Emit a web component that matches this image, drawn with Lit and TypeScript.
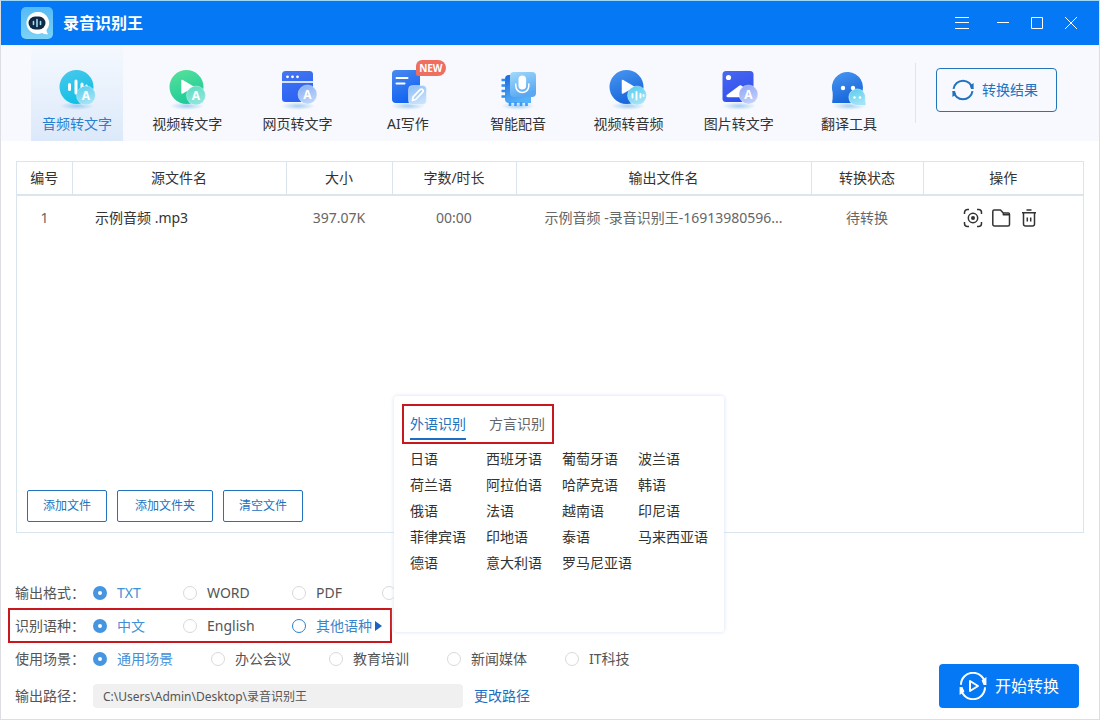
import { LitElement, html, svg, css, TemplateResult } from "lit";
import { customElement, property, state } from "lit/decorators.js";
import { classMap } from "lit/directives/class-map.js";

interface Tool {
  id: string;
  label: string;
  badge?: string;
}

interface Choice {
  label: string;
  hidden?: boolean;
  more?: boolean;
}

const TOOLS: Tool[] = [
  { id: "audio", label: "音频转文字" },
  { id: "video", label: "视频转文字" },
  { id: "web", label: "网页转文字" },
  { id: "write", label: "AI写作", badge: "NEW" },
  { id: "dub", label: "智能配音" },
  { id: "extract", label: "视频转音频" },
  { id: "image", label: "图片转文字" },
  { id: "translate", label: "翻译工具" },
];

const LANGUAGES = [
  "日语", "西班牙语", "葡萄牙语", "波兰语",
  "荷兰语", "阿拉伯语", "哈萨克语", "韩语",
  "俄语", "法语", "越南语", "印尼语",
  "菲律宾语", "印地语", "泰语", "马来西亚语",
  "德语", "意大利语", "罗马尼亚语",
];

const letterBadge = (cx: number, cy: number, fill: string) => svg`
  <circle cx=${cx} cy=${cy} r="9.5" fill=${fill} stroke="#fff" stroke-opacity=".35"/>
  <text x=${cx} y=${cy + 4} text-anchor="middle" font-size="12" font-weight="700" fill="#fff">A</text>`;

const ART: Record<string, TemplateResult> = {
  audio: svg`
    <circle cx="21.5" cy="20" r="17" fill="url(#g-cyan)"/>
    <g stroke="#fff" stroke-width="3" stroke-linecap="round">
      <path d="M14.5 17.500v5M21 14v12M27 17v5" /><path d="M31.500 18.500v1.500" stroke-width="2"/>
    </g>
    ${letterBadge(31, 28.5, "url(#b-cyan)")}`,
  video: svg`
    <circle cx="21.5" cy="20" r="17" fill="url(#g-green)"/>
    <path d="M17 13.500v12.500L28 19.800z" fill="#fff" stroke="#fff" stroke-width="1.500" stroke-linejoin="round"/>
    ${letterBadge(31, 28.5, "url(#b-green)")}`,
  web: svg`
    <rect x="6" y="4" width="31" height="31" rx="3.500" fill="url(#g-royal)"/>
    <path d="M6 15h31" stroke="#fff" stroke-width="1.600"/>
    <g fill="#fff"><circle cx="11.500" cy="9.800" r="1.400"/><circle cx="16.500" cy="9.800" r="1.400"/><circle cx="21.500" cy="9.800" r="1.400"/></g>
    ${letterBadge(31.5, 27.5, "url(#b-royal)")}`,
  write: svg`
    <rect x="6" y="3" width="28" height="33" rx="4" fill="url(#g-azure)"/>
    <path d="M10.500 11h11M10.500 16.500h8" stroke="#fff" stroke-width="2" stroke-linecap="round"/>
    <rect x="22.500" y="18.500" width="18" height="19" rx="4" fill="url(#b-azure)" stroke="#fff" stroke-opacity=".4"/>
    <path d="M26.500 33.500l.6-3.600 7-7.200a1.700 1.700 0 0 1 2.600 2.400l-7 7.400z" fill="none" stroke="#fff" stroke-width="1.700" stroke-linejoin="round"/>`,
  dub: svg`
    <path d="M13 8h22v28H13a4 4 0 0 1-4-4V12a4 4 0 0 1 4-4z" fill="url(#g-chip)"/>
    <path d="M5.500 13h4M5.500 18.500h4M5.500 24h4M5.500 29.500h4" stroke="#2c8df0" stroke-width="2.600"/>
    <path d="M14 35v4M19.500 35v4M25 35v4M30.500 35v4" stroke="#3f9cf4" stroke-width="2.600"/>
    <path d="M34 31v2a3 3 0 0 1-3 3h-4l4-6z" fill="#55b1f8"/>
    <rect x="14" y="5" width="26" height="25" rx="4" fill="url(#b-chip)"/>
    <rect x="22.500" y="8.500" width="7.600" height="14" rx="3.800" fill="#fff"/>
    <path d="M19.800 17v2a6.500 6.500 0 0 0 13 0v-2" fill="none" stroke="#fff" stroke-width="1.500" stroke-linecap="round"/>`,
  extract: svg`
    <circle cx="20.500" cy="20" r="17" fill="url(#g-blue)"/>
    <path d="M16.500 13.500v12.500L27.500 19.800z" fill="#fff" stroke="#fff" stroke-width="1.500" stroke-linejoin="round"/>
    <circle cx="31" cy="28.500" r="9.500" fill="url(#b-cyan)" stroke="#fff" stroke-opacity=".35"/>
    <path d="M26.500 27v3.500M30.500 25v7.500M34.500 27v3.500M37.500 28v1" stroke="#fff" stroke-width="1.900" stroke-linecap="round"/>`,
  image: svg`
    <rect x="5.500" y="4" width="31" height="31" rx="3.500" fill="url(#g-indigo)"/>
    <circle cx="11.500" cy="10.500" r="2.600" fill="#fff"/>
    <path d="M9.800 28L22.500 18.500q1.200-.8 2.200.2l6 5v6.500H11q-2.400-.4-1.200-2.200z" fill="#fff"/>
    ${letterBadge(31.5, 27.5, "url(#b-indigo)")}`,
  translate: svg`
    <path d="M6 36q-1.200 0-.9-1.100.9-3.400.5-9.900A15.500 15.500 0 1 1 34.500 27q-3 9-10 9z" fill="url(#g-blue)"/>
    <circle cx="16" cy="21" r="2.200" fill="#fff"/><circle cx="26" cy="21" r="2.200" fill="#fff"/>
    <path d="M37.600 38.500H30.500a8.300 8.300 0 1 1 7.900-7.500q-.2 3.500.6 6 .3 1.500-1.400 1.500z" fill="url(#b-cyan)" stroke="#fff" stroke-opacity=".5"/>
    <circle cx="27.500" cy="30.500" r="1.200" fill="#fff"/><circle cx="33" cy="30.500" r="1.200" fill="#fff"/>`,
};

const gradient = (id: string, from: string, to: string) => svg`
  <linearGradient id=${id} x1="0" y1="0" x2="0.4" y2="1">
    <stop offset="0" stop-color=${from}/><stop offset="1" stop-color=${to}/>
  </linearGradient>`;

@customElement("tool-icon")
export class ToolIcon extends LitElement {
  @property() name = "audio";

  static styles = css`
    :host { display: block; width: 44px; height: 44px; }
    .art { display: block; font-family: "Noto Sans", sans-serif; }
  `;

  render() {
    return html`<svg class="art" width="44" height="44" viewBox="0 0 44 44" aria-hidden="true">
      <defs>
        ${gradient("g-cyan", "#4cc8ec", "#12c0e6")}
        ${gradient("b-cyan", "#55cdec", "#a4e3f7")}
        ${gradient("g-green", "#5ae29a", "#1fcb98")}
        ${gradient("b-green", "#5adcc0", "#8fe6dc")}
        ${gradient("g-royal", "#4677f0", "#2a62f4")}
        ${gradient("b-royal", "#86aef5", "#bcd4fa")}
        ${gradient("g-azure", "#4a8af0", "#1263f2")}
        ${gradient("b-azure", "#8abdf5", "#c8e1fb")}
        ${gradient("g-chip", "#1a68dc", "#55b1f8")}
        ${gradient("b-chip", "#a2dafb", "#5aa8f2")}
        ${gradient("g-blue", "#4a98f0", "#1766dc")}
        ${gradient("g-indigo", "#4a68f0", "#3050ee")}
        ${gradient("b-indigo", "#8ea6f4", "#c0cefa")}
        <radialGradient id="shade">
          <stop offset="0" stop-color="#6fb2e8" stop-opacity=".6"/>
          <stop offset="1" stop-color="#6fb2e8" stop-opacity="0"/>
        </radialGradient>
      </defs>
      <ellipse cx="22" cy="39" rx="17" ry="4" fill="url(#shade)"/>
      ${ART[this.name]}
    </svg>`;
  }
}

@customElement("app-root")
export class AppRoot extends LitElement {
  @state() private tool = "audio";
  @state() private picked: Record<string, number> = { format: 0, language: 0, scene: 0 };
  @state() private tab = 0;

  static styles = css`
    :host {
      display: block;
      font: 14px/20px "Noto Sans", "Noto Sans CJK SC", sans-serif;
      color: #333;
    }
    * { box-sizing: border-box; }
    button, input { font: inherit; color: inherit; }
    button { padding: 0; border: 0; background: none; cursor: pointer; white-space: nowrap; }
    svg { display: block; flex: none; }

    .window {
      display: flex;
      flex-direction: column;
      min-height: 100vh;
      border: 1px solid #dcdee2;
      border-top-color: #9fd8f5;
      background: #fff;
    }

    .titlebar {
      display: flex;
      align-items: center;
      height: 44px;
      padding: 0 11px 0 20px;
      background: #0478f5;
      color: #fff;
    }
    .brand { margin: 0 auto 0 10px; font-size: 16px; line-height: 24px; font-weight: 700; }
    .control { display: grid; place-items: center; width: 34px; height: 34px; }
    .control-menu { margin-right: 7px; }

    .toolbar {
      display: flex;
      align-items: center;
      gap: 20px;
      height: 96px;
      padding: 0 42px 0 30px;
      background: #f7f9fe;
    }
    .tools { display: flex; flex: 1; justify-content: space-between; align-self: stretch; }
    .tool {
      position: relative;
      display: flex;
      flex-direction: column;
      align-items: center;
      gap: 3px;
      width: 92px;
      padding-top: 22px;
    }
    .tool-active { color: #2b7fd0; background: linear-gradient(#f5f9fe, #dce9fa); }
    .new {
      position: absolute;
      left: 54px;
      top: 15px;
      width: 30px;
      border-radius: 6px 8px 8px 2px;
      background: #ee6f60;
      color: #fff;
      font-size: 10px;
      line-height: 16px;
      font-weight: 700;
    }
    .divider { width: 1px; height: 60px; background: #e0e4ec; }
    .result {
      display: flex;
      align-items: center;
      justify-content: center;
      gap: 7px;
      width: 121px;
      height: 44px;
      margin-bottom: 6px;
      padding-right: 4px;
      border: 1px solid #2475b8;
      border-radius: 4px;
      color: #2272be;
    }

    .content { display: flex; flex: 1; padding: 20px 15px 0; }
    .panel {
      display: flex;
      flex: 1;
      flex-direction: column;
      justify-content: space-between;
      border: 1px solid #dbe5ee;
    }
    .files { width: 100%; table-layout: fixed; border-collapse: collapse; text-align: center; }
    .files th { height: 33px; padding: 0; font-weight: 400; border-bottom: 2px solid #dbe5ee; }
    .files th + th { border-left: 1px solid #dbe5ee; }
    .files td { height: 44px; padding: 0; color: #666; }
    .files .source { padding-left: 23px; text-align: left; color: #333; }
    .files .output { overflow: hidden; text-overflow: ellipsis; white-space: nowrap; }
    .c-index { width: 55px; }
    .c-source { width: 214px; }
    .c-size { width: 106px; }
    .c-length { width: 124px; }
    .c-state { width: 112px; }
    .c-action { width: 160px; }
    .actions { display: flex; justify-content: center; gap: 8px; padding-right: 4px; color: #333; }

    .panel-buttons { display: flex; gap: 10px; padding: 10px; }
    .outline {
      height: 32px;
      padding: 0 15px;
      border: 1px solid #2272be;
      border-radius: 2px;
      color: #2272be;
      font-size: 12px;
    }
    .outline-wide { padding: 0 17px; }

    .footer {
      display: flex;
      align-items: flex-end;
      justify-content: space-between;
      padding: 43px 20px 11px 14px;
    }
    .row {
      position: relative;
      display: flex;
      align-items: center;
      height: 33px;
      margin: 0;
      padding: 0;
      border: 0;
      color: #555;
    }
    .row-path { height: 24px; margin-top: 9px; }
    .name { width: 78px; }
    .choices { display: grid; grid-template-columns: 90px 109px 90px 90px; }
    .choices-scene { grid-template-columns: repeat(5, 118px); }
    .choice { display: flex; align-items: center; gap: 10px; white-space: nowrap; }
    .choice-on { color: #4290d8; }
    .choice-more { color: #3a86cc; }
    .radio {
      flex: none;
      appearance: none;
      width: 14px;
      height: 14px;
      margin: 0;
      border: 1px solid #d9d9d9;
      border-radius: 50%;
      background: #fff;
    }
    .radio:checked { border: 5px solid #4595e0; }
    .choice-more .radio { border-color: #2f7fca; }
    .choice-text { display: flex; align-items: center; gap: 3px; }

    .mark { position: absolute; border: 2px solid #c8181e; pointer-events: none; }
    .mark-row { left: -7px; top: -1px; width: 384px; height: 35px; }
    .mark-tabs { left: 8px; top: 8px; width: 152px; height: 40px; }

    .path {
      width: 370px;
      height: 24px;
      padding: 0 10px;
      border: 0;
      border-radius: 4px;
      background: #f0f0f0;
      font-size: 12px;
    }
    .change { margin-left: 11px; color: #1a6fc4; text-decoration: none; }
    .start {
      display: flex;
      align-items: center;
      justify-content: center;
      gap: 8px;
      width: 140px;
      height: 44px;
      border-radius: 4px;
      background: #0478f5;
      color: #fff;
      font-size: 16px;
    }

    .menu {
      position: absolute;
      left: 379px;
      bottom: 10px;
      z-index: 2;
      width: 330px;
      min-height: 236px;
      padding: 16px 0 16px 16px;
      border-radius: 3px;
      background: #fff;
      box-shadow: 0 0 4px #d3e0f4;
      color: #333;
    }
    .tabs { display: flex; gap: 23px; }
    .tab { height: 28px; padding-bottom: 2px; border-bottom: 2px solid transparent; color: #666; }
    .tab-on { border-color: #1a6fc4; color: #2272be; }
    .languages { display: grid; grid-template-columns: repeat(4, 76px); padding-top: 6px; }
    .language { height: 26px; text-align: left; }
  `;

  private choices(group: string, title: string, items: Choice[], extra?: TemplateResult) {
    return html`<fieldset class="row" role="radiogroup" aria-label=${title}>
      <span class="name">${title}：</span>
      <div class=${classMap({ choices: true, "choices-scene": group === "scene" })}>
        ${items.map((item, i) => html`
          <label class=${classMap({
            choice: true,
            "choice-on": this.picked[group] === i,
            "choice-more": !!item.more,
          })}>
            <input class="radio" type="radio" name=${group} aria-label=${item.label}
              .checked=${this.picked[group] === i}
              @change=${() => (this.picked = { ...this.picked, [group]: i })}>
            ${item.hidden ? "" : html`<span class="choice-text">${item.label}${item.more
              ? html`<svg width="7" height="10" viewBox="0 0 7 10"><path d="M0 0l7 5-7 5z" fill="#1a63c0"/></svg>`
              : ""}</span>`}
          </label>`)}
      </div>
      ${extra ?? ""}
    </fieldset>`;
  }

  private menu() {
    return html`<span class="mark mark-row"></span>
      <div class="menu">
        <div class="tabs" role="tablist">
          ${["外语识别", "方言识别"].map((t, i) => html`
            <button class=${classMap({ tab: true, "tab-on": this.tab === i })} role="tab"
              aria-selected=${this.tab === i} @click=${() => (this.tab = i)}>${t}</button>`)}
        </div>
        <div class="languages">
          ${LANGUAGES.map((l) => html`<button class="language">${l}</button>`)}
        </div>
        <span class="mark mark-tabs"></span>
      </div>`;
  }

  render() {
    return html`<div class="window">
      <header class="titlebar">
        <svg width="32" height="32" viewBox="0 0 32 32" aria-hidden="true">
          <defs><linearGradient id="logo" x1="0" y1="0" x2="0" y2="1">
            <stop offset="0" stop-color="#55baf6"/><stop offset="1" stop-color="#7bd3f5"/>
          </linearGradient></defs>
          <rect width="32" height="32" rx="5" fill="url(#logo)"/>
          <path d="M16 5a11 11 0 1 0 5 21q2.500 1.600 6 1.200-1.500-1.700-1.500-4.200A11 11 0 0 0 16 5z" fill="#fff"/>
          <rect x="7.500" y="9.500" width="17" height="13" rx="6.500" fill="#102a43"/>
          <path d="M12.500 14.500v3M16 12.500v7M19.500 14.500v3" stroke="#9fdcf7" stroke-width="1.600" stroke-linecap="round"/>
        </svg>
        <span class="brand">录音识别王</span>
        <button class="control control-menu" aria-label="菜单">
          <svg width="14" height="12" viewBox="0 0 14 12" stroke="#fff"><path d="M0 .5h14M0 5.500h14M0 11.500h14"/></svg>
        </button>
        <button class="control" aria-label="最小化">
          <svg width="12" height="12" viewBox="0 0 12 12" stroke="#fff"><path d="M0 5.500h12"/></svg>
        </button>
        <button class="control" aria-label="最大化">
          <svg width="12" height="12" viewBox="0 0 12 12" fill="none" stroke="#fff"><path d="M.5.5h11v11H.5z"/></svg>
        </button>
        <button class="control" aria-label="关闭">
          <svg width="12" height="12" viewBox="0 0 12 12" stroke="#fff"><path d="M0 0l12 12M12 0L0 12"/></svg>
        </button>
      </header>

      <nav class="toolbar">
        <div class="tools">
          ${TOOLS.map((t) => html`
            <button class=${classMap({ tool: true, "tool-active": this.tool === t.id })}
              @click=${() => (this.tool = t.id)}>
              <tool-icon .name=${t.id}></tool-icon>
              <span>${t.label}</span>
              ${t.badge ? html`<span class="new">${t.badge}</span>` : ""}
            </button>`)}
        </div>
        <span class="divider"></span>
        <button class="result">
          <svg width="24" height="24" viewBox="0 0 24 24" fill="none" stroke="#2272be" stroke-width="2">
            <path d="M2.500 10.900a9.600 9.600 0 0 1 19 0M21.500 13.100a9.600 9.600 0 0 1-19 0"/>
            <path d="M22.600 5v6h-2.600l-1.200-3.600zM1.400 19v-6h2.600l1.200 3.600z" fill="#2272be" stroke="none"/>
          </svg>
          转换结果
        </button>
      </nav>

      <main class="content">
        <section class="panel">
          <table class="files">
            <thead>
              <tr>
                <th class="c-index">编号</th>
                <th class="c-source">源文件名</th>
                <th class="c-size">大小</th>
                <th class="c-length">字数/时长</th>
                <th>输出文件名</th>
                <th class="c-state">转换状态</th>
                <th class="c-action">操作</th>
              </tr>
            </thead>
            <tbody>
              <tr>
                <td>1</td>
                <td class="source">示例音频 .mp3</td>
                <td>397.07K</td>
                <td>00:00</td>
                <td class="output">示例音频 -录音识别王-16913980596...</td>
                <td>待转换</td>
                <td>
                  <div class="actions">
                    <button aria-label="预览">
                      <svg width="20" height="20" viewBox="0 0 20 20" fill="none" stroke="#333" stroke-width="1.500">
                        <path d="M1.500 6V4.500a3 3 0 0 1 3-3H6M14 1.500h1.500a3 3 0 0 1 3 3V6M18.500 14v1.500a3 3 0 0 1-3 3H14M6 18.500H4.500a3 3 0 0 1-3-3V14"/>
                        <circle cx="10" cy="10" r="4.700"/><circle cx="10" cy="10" r="2" fill="#333" stroke="none"/>
                      </svg>
                    </button>
                    <button aria-label="打开文件夹">
                      <svg width="20" height="20" viewBox="0 0 20 20" fill="none" stroke="#333" stroke-width="1.500" stroke-linejoin="round">
                        <path d="M1.800 3.500a1.500 1.500 0 0 1 1.500-1.500H9.500l2.800 3h4.900a1.300 1.300 0 0 1 1.300 1.300v10.200a1.500 1.500 0 0 1-1.500 1.500H3.300a1.500 1.500 0 0 1-1.500-1.500zM12.300 5v1.800h6"/>
                      </svg>
                    </button>
                    <button aria-label="删除">
                      <svg width="20" height="20" viewBox="0 0 20 20" fill="none" stroke="#333" stroke-width="1.500">
                        <path d="M3 4.800h14M7.500 2h5M4.500 5v11a2 2 0 0 0 2 2h7a2 2 0 0 0 2-2V5M8.300 9.500v4M11.700 9.500v4"/>
                      </svg>
                    </button>
                  </div>
                </td>
              </tr>
            </tbody>
          </table>
          <div class="panel-buttons">
            <button class="outline">添加文件</button>
            <button class="outline outline-wide">添加文件夹</button>
            <button class="outline">清空文件</button>
          </div>
        </section>
      </main>

      <footer class="footer">
        <div class="settings">
          ${this.choices("format", "输出格式", [
            { label: "TXT" }, { label: "WORD" }, { label: "PDF" }, { label: "其他格式", hidden: true },
          ])}
          ${this.choices("language", "识别语种", [
            { label: "中文" }, { label: "English" }, { label: "其他语种", more: true },
          ], this.menu())}
          ${this.choices("scene", "使用场景", [
            { label: "通用场景" }, { label: "办公会议" }, { label: "教育培训" },
            { label: "新闻媒体" }, { label: "IT科技" },
          ])}
          <div class="row row-path">
            <label class="name" for="path">输出路径：</label>
            <input class="path" id="path" readonly .value=${"C:\\Users\\Admin\\Desktop\\录音识别王"}>
            <a class="change" href="#">更改路径</a>
          </div>
        </div>
        <button class="start">
          <svg width="28" height="28" viewBox="0 0 28 28" fill="none" stroke="#fff" stroke-width="2">
            <path d="M2 12.800a12 12 0 0 1 24 0M26 15.200a12 12 0 0 1-24 0"/>
            <path d="M27.400 5v8h-2.800l-2-4.500zM.6 23v-8h2.800l2 4.500z" fill="#fff" stroke="none"/>
            <path d="M11 9v10l8-5z" stroke-linejoin="round"/>
          </svg>
          开始转换
        </button>
      </footer>
    </div>`;
  }
}
